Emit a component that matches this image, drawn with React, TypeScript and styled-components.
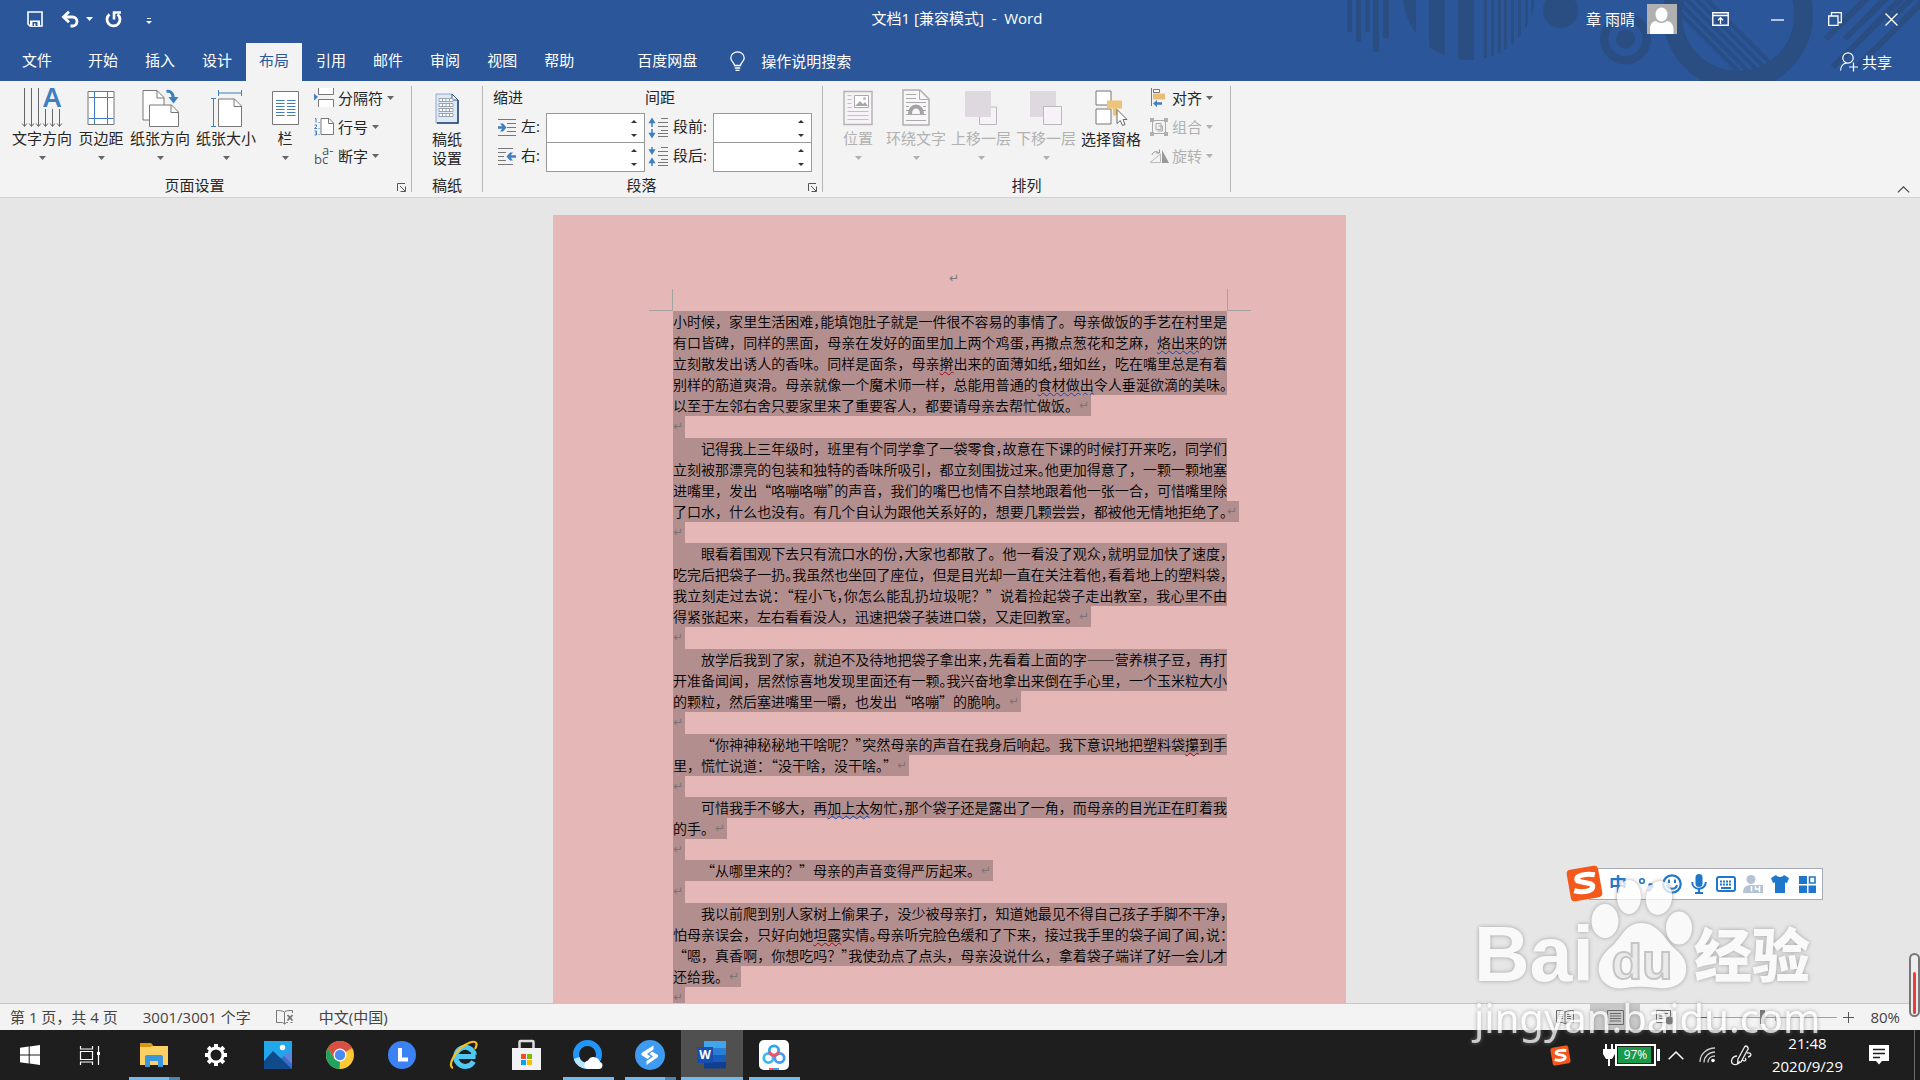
import React from 'react';
import styled, { createGlobalStyle, css } from 'styled-components';

const UI = `"Open Sans", "Noto Sans CJK SC", sans-serif`;
const BODY = `"Noto Sans CJK SC", sans-serif`;

const Global = createGlobalStyle`
  *, *::before, *::after { box-sizing: border-box; }
  body { margin: 0; overflow: hidden; font: 15px/20px ${UI}; color: #262626; background: #e6e6e6; }
  button { font: inherit; color: inherit; background: none; border: 0; padding: 0; margin: 0; cursor: pointer; }
  svg { display: block; flex: none; overflow: visible; }
`;

const Screen = styled.div`
  position: relative;
  display: flex;
  flex-direction: column;
  height: 100vh;
`;

/* ---------- title bar and tabs ---------- */

const Header = styled.header`
  position: relative;
  flex: none;
  background: #2b579a;
  color: #fff;
`;
const HeaderArt = styled.svg`
  position: absolute;
  top: 0;
  right: 0;
  overflow: hidden;
`;
const TitleBar = styled.div`
  position: relative;
  display: grid;
  grid-template-columns: 1fr auto 1fr;
  align-items: center;
  height: 38px;
`;
const QuickAccess = styled.div`
  display: flex;
  align-items: center;
  padding-left: 27px;
  gap: 12px;
`;
const UndoGroup = styled.div`
  display: flex;
  align-items: center;
  gap: 6px;
  padding: 0 0 0 6px;
`;
const CustomizeButton = styled.button`
  margin-left: 12px;
  padding-top: 4px;
`;
const DocTitle = styled.h1`
  margin: 0;
  padding: 0 6px 2px 0;
  font: inherit;
  white-space: pre;
`;
const WindowControls = styled.div`
  display: flex;
  justify-content: flex-end;
  align-items: center;
`;
const Account = styled.button`
  display: flex;
  align-items: center;
  gap: 12px;
  margin-right: 15px;
`;
const ControlButton = styled.button`
  display: flex;
  justify-content: center;
  align-items: center;
  width: 57px;
  height: 38px;
`;
const TabRow = styled.nav`
  position: relative;
  display: flex;
  align-items: stretch;
  gap: 1px;
  height: 43px;
  padding-top: 5px;
`;
const Tab = styled.button<{ $active?: boolean; $file?: boolean; $apart?: boolean }>`
  padding: 0 ${p => (p.$file ? 22 : 13)}px 4px;
  margin-left: ${p => (p.$apart ? 36 : 0)}px;
  background: ${p => (p.$active ? '#f3f3f3' : 'transparent')};
  color: ${p => (p.$active ? '#2b579a' : '#fff')};
`;
const TellMe = styled.button`
  display: flex;
  align-items: center;
  gap: 16px;
  margin-left: 19px;
  padding-bottom: 2px;
`;
const Share = styled.button`
  display: flex;
  align-items: center;
  gap: 4px;
  margin-left: auto;
  margin-right: 28px;
`;

/* ---------- ribbon ---------- */

const Ribbon = styled.section`
  display: flex;
  flex: none;
  padding: 5px 0;
  height: 117px;
  background: #f3f3f3;
  border-bottom: 1px solid #d2d2d2;
`;
const Group = styled.div<{ $width: number }>`
  display: flex;
  flex-direction: column;
  flex: none;
  width: ${p => p.$width}px;
  border-right: 1px solid #b5b5b5;
`;
const GroupBody = styled.div<{ $inset: number; $gap?: number }>`
  display: flex;
  flex: 1;
  gap: ${p => p.$gap ?? 5}px;
  padding: 0 ${p => p.$inset}px;
`;
const GroupFooter = styled.div`
  display: flex;
  align-items: center;
  height: 16px;
`;
const GroupTitle = styled.span`
  flex: 1;
  text-align: center;
  line-height: 16px;
  padding-top: 2px;
`;
const Launcher = styled.button`
  display: flex;
  align-items: flex-end;
  width: 22px;
  height: 15px;
  padding-left: 8px;
`;
const BigButton = styled.button<{ $disabled?: boolean }>`
  display: flex;
  flex-direction: column;
  align-items: center;
  flex: none;
  min-width: 46px;
  height: 82px;
  line-height: 19px;
  white-space: nowrap;
  color: ${p => (p.$disabled ? '#b1b1b1' : '#262626')};
`;
const IconBox = styled.span`
  display: flex;
  justify-content: center;
  align-items: center;
  height: 44px;
`;
const CaretBox = styled.span`
  display: flex;
  align-items: center;
  height: 20px;
`;
const SmallColumn = styled.div<{ $inset?: number }>`
  display: flex;
  flex-direction: column;
  padding-left: ${p => p.$inset ?? 0}px;
`;
const SmallButton = styled.button<{ $disabled?: boolean }>`
  display: flex;
  align-items: center;
  height: 29px;
  padding-bottom: 6px;
  gap: 4px;
  white-space: nowrap;
  color: ${p => (p.$disabled ? '#b1b1b1' : '#262626')};
`;
const Fields = styled.div`
  display: grid;
  grid-template-columns: auto auto;
  grid-template-rows: 27px 29px 29px;
`;
const FieldsTitle = styled.span`
  padding-top: 1px;
`;
const Field = styled.div<{ $label: number }>`
  display: grid;
  grid-template-columns: 20px ${p => p.$label}px 99px;
  align-items: center;
  padding-left: 4px;
  column-gap: 4px;
`;
const FieldLabel = styled.label`
  padding-bottom: 4px;
`;
const Spin = styled.div`
  display: flex;
  height: 30px;
  margin-bottom: -1px;
  background: #fff;
  border: 1px solid #999;
`;
const SpinInput = styled.input`
  flex: 1;
  min-width: 0;
  border: 0;
  padding: 0 6px;
  font: inherit;
  background: transparent;
`;
const SpinArrows = styled.div`
  display: flex;
  flex-direction: column;
  width: 20px;
`;
const SpinArrow = styled.button`
  display: flex;
  flex: 1;
  justify-content: center;
  align-items: center;
`;
const Collapse = styled.button`
  align-self: flex-end;
  margin: 0 10px -1px auto;
`;

/* ---------- document ---------- */

const Canvas = styled.main`
  flex: 1;
  min-height: 0;
  overflow: hidden;
  display: flex;
  justify-content: center;
  padding: 17px 21px 0 0;
  background: #e6e6e6;
`;
const Page = styled.article`
  flex: none;
  width: 793px;
  height: 1122px;
  padding: 0 119px 0 120px;
  background: #e5b7b7;
  border-top: 1px solid #c6c6c6;
  color: #000;
`;
const PageHeader = styled.div`
  display: flex;
  justify-content: center;
  align-items: flex-end;
  height: 73px;
  padding-left: 10px;
`;
const CropMarks = styled.div`
  display: flex;
  justify-content: space-between;
  height: 22px;
  margin: 0 -24px;
`;
const Crop = styled.span<{ $side: 'left' | 'right' }>`
  width: 24px;
  border-bottom: 1px solid #a3a3a3;
  ${p => (p.$side === 'left' ? css`border-right: 1px solid #a3a3a3;` : css`border-left: 1px solid #a3a3a3;`)}
`;
const Paragraph = styled.div`
  font: 350 14px/21px ${BODY};
`;
const Line = styled.div<{ $full: boolean }>`
  display: flex;
  width: ${p => (p.$full ? '100%' : 'fit-content')};
  height: 21px;
  background: #b28e8e;
`;
const LineText = styled.span<{ $full: boolean; $indent: boolean }>`
  flex: none;
  width: ${p => (p.$full ? '100%' : 'auto')};
  padding-left: ${p => (p.$indent ? 28 : 0)}px;
  white-space: nowrap;
  text-align-last: ${p => (p.$full ? 'justify' : 'left')};
`;
const HalfPunct = styled.span`
  font-feature-settings: "halt";
`;
const Mark = styled.span<{ $selected?: boolean; $tall?: boolean }>`
  display: block;
  flex: none;
  width: 12px;
  height: ${p => (p.$tall ? 22 : 21)}px;
  font: 12px/21px "DejaVu Sans", sans-serif;
  color: #7c7474;
  background: ${p => (p.$selected ? '#b28e8e' : 'transparent')};
`;
const Squiggle = styled.span<{ $color: string }>`
  text-decoration: underline wavy ${p => p.$color} 1px;
  text-underline-offset: 2px;
  text-decoration-skip-ink: none;
`;

/* ---------- status bar ---------- */

const StatusBar = styled.footer`
  display: flex;
  align-items: center;
  flex: none;
  height: 27px;
  padding: 0 20px 0 10px;
  border-top: 1px solid #c6c6c6;
  background: #f3f3f3;
  color: #444;
`;
const StatusButton = styled.button`
  display: flex;
  align-items: center;
  margin-right: 25px;
  white-space: nowrap;
`;
const StatusRight = styled.div`
  display: flex;
  align-items: center;
  margin-left: auto;
`;
const ViewButton = styled.button<{ $active?: boolean }>`
  display: flex;
  justify-content: center;
  align-items: center;
  width: 50px;
  height: 26px;
  background: ${p => (p.$active ? '#c8c8c8' : 'transparent')};
`;
const ZoomArea = styled.div`
  display: flex;
  align-items: center;
  gap: 6px;
  margin-left: 6px;
`;
const ZoomSlider = styled.input`
  appearance: none;
  width: 124px;
  height: 14px;
  margin: 0;
  background: linear-gradient(#a0a0a0, #a0a0a0) center / 100% 1px no-repeat,
    linear-gradient(#a0a0a0, #a0a0a0) center / 1px 8px no-repeat;
  &::-webkit-slider-thumb {
    appearance: none;
    width: 5px;
    height: 14px;
    background: #777;
  }
`;
const ZoomValue = styled.button`
  margin-left: 16px;
`;

/* ---------- task bar ---------- */

const TaskBar = styled.footer`
  display: flex;
  flex: none;
  height: 50px;
  background: #1e1e1e;
  color: #fff;
`;
const TaskSlot = styled.button<{ $narrow?: boolean; $active?: boolean; $first?: boolean }>`
  display: flex;
  flex-direction: column;
  align-items: center;
  justify-content: space-between;
  width: ${p => (p.$narrow ? 60 : 62)}px;
  margin-left: ${p => (p.$first ? 3 : 0)}px;
  background: ${p => (p.$active ? '#505050' : 'transparent')};
`;
const TaskIcon = styled.span`
  display: flex;
  justify-content: center;
  align-items: center;
  height: 47px;
  padding-top: 3px;
`;
const RunBar = styled.span<{ $kind: 'none' | 'one' | 'many' | 'wide' }>`
  width: ${p => (p.$kind === 'wide' ? '100%' : '51px')};
  height: 3px;
  background: ${p =>
    p.$kind === 'none' ? 'transparent' : p.$kind === 'many' ? 'linear-gradient(90deg, #76b9ed 40px, #4f84b0 40px)' : '#76b9ed'};
`;
const Tray = styled.div`
  display: flex;
  align-items: center;
  margin-left: auto;
`;
const TrayButton = styled.button<{ $gap: number }>`
  display: flex;
  align-items: center;
  margin-right: ${p => p.$gap}px;
`;
const Battery = styled.span`
  display: flex;
  align-items: center;
  gap: 1px;
`;
const BatteryCell = styled.span`
  width: 41px;
  height: 22px;
  border: 2px solid #fff;
  padding: 1px;
  font-size: 12px;
  line-height: 16px;
  text-align: center;
  background: linear-gradient(#189a48, #189a48) 1px 1px / 33px 16px no-repeat;
`;
const BatteryTip = styled.span`
  width: 3px;
  height: 12px;
  background: #fff;
`;
const Clock = styled.time`
  display: flex;
  flex-direction: column;
  align-items: center;
  line-height: 23px;
  margin-right: 26px;
`;
const ShowDesktop = styled.button`
  width: 6px;
  height: 50px;
  border-left: 1px solid #6b6b6b;
`;

/* ---------- floating windows ---------- */

const ImeBar = styled.div`
  position: absolute;
  right: 97px;
  bottom: 180px;
  display: flex;
  align-items: center;
  gap: 9px;
  height: 32px;
  width: 234px;
  padding-right: 6px;
  justify-content: flex-end;
  background: #fff;
  border: 1px solid #a7a9b4;
`;
const ImeLogo = styled.span`
  position: absolute;
  left: -24px;
  top: -4px;
`;
const ImeButton = styled.button`
  display: flex;
  justify-content: center;
  width: 18px;
  color: #1f77cc;
  font-weight: 700;
  font-size: 18px;
`;
const SideGauge = styled.div`
  position: absolute;
  right: 0;
  bottom: 63px;
  width: 11px;
  height: 64px;
  padding: 17px 2px 1px;
  border: 2px solid #777;
  border-radius: 6px;
  background: #eee;
`;
const GaugeFill = styled.div`
  height: 100%;
  border-radius: 2px;
  background: #f03a3a;
`;
const Watermark = styled.div`
  position: absolute;
  right: 104px;
  bottom: 36px;
  width: 342px;
  pointer-events: none;
  color: #fff;
  opacity: 0.78;
  filter: drop-shadow(0 0 2px #8c8c8c);
`;
const MarkRow = styled.div`
  display: flex;
  align-items: flex-end;
  height: 118px;
  padding-bottom: 2px;
`;
const MarkLatin = styled.span`
  font: 700 77px/72px "Liberation Sans", sans-serif;
  width: 116px;
`;
const MarkHan = styled.span`
  font: 900 58px/76px "Noto Sans CJK SC", sans-serif;
`;
const MarkUrl = styled.div`
  font: 400 40px/52px "Noto Sans", sans-serif;
  white-space: nowrap;
`;

/* ---------- icons ---------- */

type IconProps = { w: number; h: number; children: React.ReactNode };
const Icon = ({ w, h, children }: IconProps) => (
  <svg width={w} height={h} viewBox={`0 0 ${w} ${h}`} fill="none" aria-hidden="true">
    {children}
  </svg>
);
const G = '#777';
const B = '#3f7fbf';

const Caret = ({ color = '#666' }: { color?: string }) => (
  <Icon w={7} h={4}><path d="M0 0h7L3.500 4z" fill={color} /></Icon>
);

const SaveIcon = () => (
  <Icon w={16} h={16}>
    <path d="M1 1h14v14H3l-2-2z" stroke="#fff" strokeWidth="1.600" />
    <path d="M3 9.500h10v6H3z" fill="#fff" /><path d="M5.500 11h5v4h-2v-2.500h-1.500V15h-1.500z" fill="#2b579a" />
  </Icon>
);
const UndoIcon = () => (
  <Icon w={19} h={16}>
    <path d="M3 6h8.500a4.500 4.500 0 0 1 0 9H9.500" stroke="#fff" strokeWidth="2.800" />
    <path d="M8 .8 2.500 6 8 11.200" stroke="#fff" strokeWidth="2.800" />
  </Icon>
);
const RedoIcon = () => (
  <Icon w={17} h={17}>
    <path d="M4.500 3.300A6.500 6.500 0 1 0 12.500 3.300" stroke="#fff" strokeWidth="2.800" />
    <path d="M9 8.500V1.500H16" stroke="#fff" strokeWidth="2.600" />
  </Icon>
);
const CustomizeIcon = () => (
  <Icon w={6} h={6}><path d="M1 .5h4" stroke="#fff" /><path d="M0 3h6L3 6z" fill="#fff" /></Icon>
);
const Avatar = () => (
  <Icon w={30} h={30}>
    <path d="M0 0h30v30H0z" fill="#b0b0b0" />
    <ellipse cx="14.500" cy="10.500" rx="6" ry="7" fill="#fff" />
    <path d="M3 30v-5c0-4 2-8 6-8 3 2.500 8 2.500 11 0 4 0 6.500 4 6.500 8v5z" fill="#fff" />
  </Icon>
);
const RibbonOptIcon = () => (
  <Icon w={17} h={14}>
    <path d="M.8.800h15.400v12.400H.8zM1 3.500h15" stroke="#fff" strokeWidth="1.400" />
    <path d="M8.500 12V6M6 8.200 8.500 5.700 11 8.200" stroke="#fff" strokeWidth="1.300" />
  </Icon>
);
const MinIcon = () => <Icon w={13} h={3}><path d="M0 2h13" stroke="#fff" strokeWidth="1.300" /></Icon>;
const RestoreIcon = () => (
  <Icon w={14} h={14}>
    <path d="M.7 4h9.300v9.300H.7zM3.500 4V.7H13.300V10.500H10" stroke="#fff" strokeWidth="1.300" />
  </Icon>
);
const CloseIcon = () => <Icon w={13} h={13}><path d="m.5.500 12 12m0-12-12 12" stroke="#fff" strokeWidth="1.400" /></Icon>;
const BulbIcon = () => (
  <Icon w={15} h={20}>
    <path d="M4.500 14.500c0-3-3.700-4-3.700-7.500a6.700 6.200 0 0 1 13.400 0c0 3.500-3.700 4.500-3.700 7.500zM4.800 17h5.400M5.500 19.400h4" stroke="#fff" strokeWidth="1.300" />
  </Icon>
);
const ShareIcon = () => (
  <Icon w={18} h={20}>
    <circle cx="8" cy="6" r="5.200" stroke="#fff" strokeWidth="1.200" />
    <path d="M.6 18.500c0-4 2.500-7 6-7.300M9 15h9M13.500 10.500V19.500" stroke="#fff" strokeWidth="1.200" />
  </Icon>
);

const TextDirIcon = () => (
  <Icon w={40} h={42}>
    {[2.5, 9.5, 16.5].map(x => <path key={x} d={`M${x} 1v38m-2.300-2.500 2.300 3 2.300-3`} stroke="#666" />)}
    {[23.5, 30.5, 37.5].map(x => <path key={x} d={`M${x} 22v17m-2.300-2.500 2.300 3 2.300-3`} stroke="#666" />)}
    <text x="21" y="20" fontFamily="Noto Sans" fontWeight="600" fontSize="27" fill={B}>A</text>
  </Icon>
);
const MarginsIcon = () => (
  <Icon w={28} h={36}>
    <path d="M1 1.500h26v33H1z" fill="#fff" stroke={G} />
    <path d="M7.500 2v32M20.500 2v32M1.500 7.500h25M1.500 28.500h25" stroke={B} />
  </Icon>
);
const OrientIcon = () => (
  <Icon w={37} h={38}>
    <path d="M1 1.500h14l7 7V31H1z" fill="#fff" stroke={G} /><path d="M15 1.500V9h7" stroke={G} />
    <path d="M7.500 16h22l7 7v14.500h-29z" fill="#fff" stroke={G} /><path d="M29 16v7.500h7" stroke={G} />
    <path d="M24.500 2.500c5-1 7 3 7 8" stroke={B} strokeWidth="3" /><path d="M26.500 8h10l-5 6.500z" fill={B} />
  </Icon>
);
const SizeIcon = () => (
  <Icon w={32} h={38}>
    <path d="M8.500 10h16l7 7v20.500h-23z" fill="#fff" stroke={G} /><path d="M24 10v7.500h7" stroke={G} />
    <path d="M8.500 4h23M8.500 1v6M31.500 1v6M3.500 10v27M1 9.500h5M1 37.500h5" stroke={B} />
  </Icon>
);
const ColumnsIcon = () => (
  <Icon w={27} h={36}>
    <path d="M.5 1.500h26v33H.5z" fill="#fff" stroke={G} />
    {[10, 13, 16, 19, 22, 25].map(y => <path key={y} d={`M4 ${y + .5}h8.500M15 ${y + .5}h8.500`} stroke={B} />)}
  </Icon>
);
const BreakIcon = () => (
  <Icon w={20} h={19}>
    <path d="M4.500 0v6.500h15V0M4.500 19v-7.500h15V19" fill="#fff" stroke={G} /><path d="M0 5.500 4 9l-4 3.500z" fill={B} />
  </Icon>
);
const LineNoIcon = () => (
  <Icon w={20} h={19}>
    <path d="M7 1.500h8l4.500 4.500v11.500H7z" fill="#fff" stroke={G} /><path d="M14.500 1.500v5h5" stroke={G} />
    <path d="M1 1.500h1v4M.5 8h2v1.500L.5 11.500h2.500M.5 14h2v4h-2M1 16h2" stroke={B} />
    <path d="M4.500 5.500h1M4.500 11.500h1M4.500 17.500h1" stroke={B} />
  </Icon>
);
const HyphenIcon = () => (
  <Icon w={20} h={20}>
    <text x="0" y="18" fontFamily="Open Sans" fontSize="13" fill="#555">bc<tspan x="8" y="9">a-</tspan></text>
  </Icon>
);
const GridPaperIcon = () => (
  <Icon w={24} h={31}>
    <path d="M1 1h16l6 6v23H1z" fill="#dfe8f5" stroke="#94a9cc" />
    <path d="M23 7v23H2" stroke="#1f3f78" strokeWidth="1.500" /><path d="M17 1v6h6z" fill="#fff" stroke="#2e568f" />
    {[6, 11, 16, 21].map(y => <path key={y} d={`M4 ${y - .5}h14v3H4zM7.500 ${y}v3M11 ${y}v3M14.500 ${y}v3`} stroke="#9aa3b0" fill="#fff" />)}
  </Icon>
);
const IndentIcon = ({ right }: { right?: boolean }) => (
  <Icon w={20} h={17}>
    <path d={right ? 'M1 .5h15M1 4.500h8M1 8.500h6M1 12.500h8M1 16.500h15' : 'M1 .5h18M10 4.500h9M10 8.500h9M10 12.500h9M1 16.500h18'} stroke={G} />
    <path d={right ? 'M19 7.300h-5.200l2.200-2.800h-3L9.500 8.500l3.500 4h3l-2.200-2.800H19z' : 'M1 7.300h4.200L3 4.500h3l3.500 4-3.500 4H3l2.200-2.800H1z'} fill={B} />
  </Icon>
);
const SpacingIcon = ({ after }: { after?: boolean }) => (
  <Icon w={20} h={20}>
    <path d="M12 .5h7M9 4.500h10M9 8.500h10M12 12.500h7M9 15.500h10M9 18.500h10" stroke={G} />
    {after
      ? <path d="M3 0v5M.8 3 3 6.500 5.200 3zM3 19v-5M.8 15.500 3 12l2.200 3.500z" stroke={B} strokeWidth="1.500" fill={B} />
      : <path d="M3 9V2M.8 4.500 3 1l2.200 3.500zM3 11v7M.8 15.500 3 19l2.200-3.500z" stroke={B} strokeWidth="1.500" fill={B} />}
  </Icon>
);
const PositionIcon = () => (
  <Icon w={30} h={36}>
    <path d="M1 1.500h28v33H1z" fill="#f7f2f7" stroke="#b5b5b5" strokeWidth="1.500" />
    <path d="M4.500 5.500h4M4.500 9.500h4M4.500 13.500h4M4.500 17.500h4M4.500 21.500h21M4.500 25.500h21M4.500 29.500h21" stroke="#c4bfc4" />
    <path d="M11.500 5.500h14v12h-14z" fill="#fff" stroke="#aaa" /><path d="m12 16 5-5 3 3 2-2 3 4z" fill="#a7a7a7" /><circle cx="21.500" cy="8.500" r="1.500" fill="#bbb" />
  </Icon>
);
const WrapIcon = () => (
  <Icon w={28} h={37}>
    <path d="M1 1h17l9 9v26H1z" fill="#f9f6f9" stroke="#b0b0b0" strokeWidth="1.500" /><path d="M17.500 1v9.500H27" stroke="#b0b0b0" />
    <path d="M4 5.500h10M4 9.500h10M4 13.500h20M4 17.500h3M21 17.500h3M4 21.500h3M21 21.500h3M4 25.500h20M4 31.500h20" stroke="#aaa" />
    <path d="M8 25c0-10 12-10 12 0" stroke="#a2a2a2" strokeWidth="4" />
  </Icon>
);
const LayerIcon = ({ back }: { back?: boolean }) => (
  <Icon w={33} h={36}>
    {!back && <path d="M14.500 17h17v17.500h-17z" fill="#f7f2f7" stroke="#b8b8b8" />}
    <path d="M0 1h26v26H0z" fill="#ded9de" />
    {back && <path d="M13.500 16.500h18v18h-18z" fill="#f7f2f7" stroke="#b8b8b8" />}
  </Icon>
);
const SelectPaneIcon = () => (
  <Icon w={32} h={37}>
    <path d="M1 1h15v14H1zM1 19h15v15H1z" fill="#fff" stroke={G} /><path d="M12 10.500h15v8H22v7h-4v-7h-6z" fill="#eec478" />
    <path d="M22 19.500v14l3.300-3 2.200 5 2.500-1-2-5h4z" fill="#fff" stroke="#666" />
  </Icon>
);
const AlignIcon = () => (
  <Icon w={18} h={19}>
    <path d="M3.500 1.500h6v3h-6z" fill="#fff" stroke={G} /><path d="M3 5.500h12v6H3z" fill="#e9bd77" />
    <path d="M1.500 0v18" stroke={G} /><path d="M3 15.500 7 12v2.300h5v2.500H7V19z" fill={B} />
  </Icon>
);
const GroupIcon = () => (
  <Icon w={18} h={18}>
    <path d="M3 2.500h12M3 15.500h12M2.500 3v12M15.500 3v12M6 5.500h5v6H6zM8.500 8h4v5h-5" stroke="#aaa" />
    <path d="M0 0h4v4H0zM14 0h4v4h-4zM0 14h4v4H0zM14 14h4v4h-4z" fill="#b0b0b0" />
  </Icon>
);
const RotateIcon = () => (
  <Icon w={18} h={14}>
    <path d="M10.500 13.500H0L10.500 5z" stroke="#bbb" /><path d="M12 14V1l7 13z" fill="#999" /><path d="M2 6c1-4 5-4 7-2M9.500.500V4H6" stroke="#999" />
  </Icon>
);
const LauncherIcon = () => (
  <Icon w={9} h={9}><path d="M.5 8V.5H8M3 3l5 5M8.500 3.500v5h-5" stroke="#555" /></Icon>
);
const TinyArrow = ({ down }: { down?: boolean }) => (
  <Icon w={6} h={3}><path d={down ? 'M0 0h6L3 3z' : 'M0 3h6L3 0z'} fill="#333" /></Icon>
);

const ProofIcon = () => (
  <Icon w={18} h={15}>
    <path d="M8.500 2C6 .500 3 .500.500.500V12.500h6l2 1.500 2-1.500h1.500M8.500 2v12M8.500 2C10 .500 13 .500 16.500.500V3M16.500 12.500h-2" stroke="#777" />
    <path d="m11.500 5 5 5.500m0-5.500-5 5.500" stroke="#777" strokeWidth="1.800" />
  </Icon>
);
const ReadIcon = () => (
  <Icon w={18} h={15}>
    <path d="M9 2C6 .500 3 .500.500.500V12.500h6l2.500 1.500 2.500-1.500h6V.500C15 .500 12 .500 9 2v12M3 4.500h4M3 6.500h4M3 8.500h4M11 4.500h4M11 6.500h4M11 8.500h4" stroke="#666" />
  </Icon>
);
const PrintIcon = () => (
  <Icon w={17} h={15}><path d="M.5.500h16v14H.5zM3 3.500h11M3 6h11M3 8.500h11M3 11h11" stroke="#666" /></Icon>
);
const WebIcon = () => (
  <Icon w={18} h={15}>
    <path d="M10 12.500H.5V.500h14v6M3 3.500h9M3 6h7M3 8.500h6" stroke="#666" /><circle cx="13.500" cy="10.500" r="4" fill="#777" />
  </Icon>
);

/* ---------- task bar icons ---------- */

const StartIcon = () => (
  <Icon w={20} h={20}><path d="M0 2.800 8.700 1.600V9.500H0zM9.700 1.500 20 0v9.500H9.700zM0 10.500h8.700v7.900L0 17.200zM9.700 10.500H20V20L9.700 18.500z" fill="#fff" /></Icon>
);
const TaskViewIcon = () => (
  <Icon w={21} h={19}>
    <path d="M.5 0v3h12V0M.5 19v-3h12v3M.5 5.500h12v8H.5zM18.500 0v19" stroke="#fff" strokeWidth="1.200" /><path d="M17 6h3v3h-3z" fill="#fff" />
  </Icon>
);
const ExplorerIcon = () => (
  <Icon w={28} h={24}>
    <path d="M0 3V1h11l2 2h15v19H0z" fill="#fbd165" /><path d="M0 0h11l2 2-2 2H0z" fill="#dc9712" />
    <path d="M5 24V14q0-2 2-2h14q2 0 2 2v10h-5v-6h-8v6z" fill="#3a96dd" />
  </Icon>
);
const GearIcon = () => (
  <Icon w={24} h={24}>
    <circle cx="12" cy="12" r="7" stroke="#fff" strokeWidth="3" />
    {[0, 45, 90, 135, 180, 225, 270, 315].map(a => <path key={a} d="M10 1h4v4h-4z" fill="#fff" transform={`rotate(${a} 12 12)`} />)}
  </Icon>
);
const PhotosIcon = () => (
  <Icon w={28} h={28}>
    <path d="M0 0h28v28H0z" fill="#22a7ec" /><path d="M14 28 20 14l8-4v18z" fill="#5b86d9" />
    <path d="m14 20 6-5 8 8v5H14z" fill="#3c6bd0" /><path d="M0 20 9 10l19 18H0z" fill="#114a8b" /><circle cx="18.500" cy="6.500" r="2.700" fill="#fff" />
  </Icon>
);
const ChromeIcon = () => (
  <Icon w={28} h={28}>
    <circle cx="14" cy="14" r="14" fill="#fcc934" />
    <path d="M14 14 1.900 7A14 14 0 0 1 26.100 7z" fill="#d94f42" /><path d="M14 7h12.100A14 14 0 0 0 1.900 7L8 17.500z" fill="#d94f42" />
    <path d="M1.900 7 8 17.500 14 21l-.500 7A14 14 0 0 1 1.900 7z" fill="#1ea362" /><path d="m20 17.500-6 10.500h-.5l2-7z" fill="#fcc934" />
    <circle cx="14" cy="14" r="6.500" fill="#fff" /><circle cx="14" cy="14" r="5.200" fill="#4a8af4" />
  </Icon>
);
const LIcon = () => (
  <Icon w={28} h={28}><circle cx="14" cy="14" r="14" fill="#3d82f5" /><path d="M12 7v11.500h8" stroke="#fff" strokeWidth="4" /></Icon>
);
const IeIcon = () => (
  <Icon w={30} h={28}>
    <path d="M7 15.500h19.500M24.500 20.500a9.500 9.500 0 1 1 1-6.500" stroke="#4fc8f4" strokeWidth="5" />
    <path d="M4 27C-2 25 6 10 16 4s14-3 10 4" stroke="#f3c120" strokeWidth="2.200" />
  </Icon>
);
const StoreIcon = () => (
  <Icon w={29} h={30}>
    <path d="M7.500 10V2q0-1 1-1h12q1 0 1 1v8" stroke="#ddd" strokeWidth="2.500" /><path d="M0 8h29v22H0z" fill="#f2f2f2" />
    <path d="M9 14h5v5H9z" fill="#f25022" /><path d="M15 14h5v5h-5z" fill="#7fba00" /><path d="M9 20h5v5H9z" fill="#00a4ef" /><path d="M15 20h5v5h-5z" fill="#ffb900" />
  </Icon>
);
const QqIcon = () => (
  <Icon w={30} h={30}>
    <circle cx="14.500" cy="14.500" r="11.500" stroke="#2196f8" strokeWidth="6" /><path d="M3.500 18a11.500 11.500 0 0 0 11 8" stroke="#b7e6fb" strokeWidth="6" />
    <path d="M14 29a4.500 4.500 0 0 1 1-8.500 6.500 6.500 0 0 1 12 1.500 3.600 3.600 0 0 1-1 7z" fill="#fff" />
  </Icon>
);
const BoltIcon = () => (
  <Icon w={30} h={30}>
    <circle cx="15" cy="15" r="15" fill="#3f9bef" />
    <path d="M18.500 5.500v4l-6.500 4.500 3.500 2.500-3 2.500-6-4v-2zM17 11.500l6 3.500v2l-11.500 8v-4l6.500-4.500-3.500-2.500z" fill="#fff" />
  </Icon>
);
const WordIcon = () => (
  <Icon w={30} h={28}>
    <path d="M7 0h22v7H7z" fill="#41a5ee" /><path d="M7 7h22v7H7z" fill="#2b7cd3" /><path d="M7 14h22v7H7z" fill="#185abd" /><path d="M7 21h22v6.500H7z" fill="#103f91" />
    <path d="M0 6h16v16H0z" fill="#174fae" />
    <text x="8" y="18" textAnchor="middle" fontFamily="Open Sans" fontWeight="700" fontSize="12" fill="#fff">W</text>
  </Icon>
);
const NetdiskIcon = () => (
  <Icon w={30} h={30}>
    <rect width="30" height="30" rx="5" fill="#fff" />
    <circle cx="9.500" cy="18" r="4.700" stroke="#3db8f5" strokeWidth="2.800" /><circle cx="20.500" cy="18" r="4.700" stroke="#3d9df5" strokeWidth="2.800" />
    <circle cx="15" cy="10.500" r="4.700" stroke="#2ea5f0" strokeWidth="2.800" /><path d="M10.500 12a4.700 4.700 0 0 0 9 0" stroke="#f2506e" strokeWidth="2.800" />
    <path d="M10 28h5v2h-5z" fill="#f2506e" /><path d="M15 28h5v2h-5z" fill="#3d9df5" />
  </Icon>
);
const SogouIcon = ({ size }: { size: number }) => (
  <svg width={size} height={size} viewBox="0 0 36 36" fill="none" aria-hidden="true">
    <rect x="2.500" y="2.500" width="31" height="31" rx="4" fill="#f4581b" transform="rotate(-10 18 18)" />
    <path d="M28 9.500C20 8 10 10 10.500 14s15.500 2 15.500 7-10 6-18 4" stroke="#fff" strokeWidth="5" />
  </svg>
);
const PlugIcon = () => (
  <Icon w={12} h={22}><path d="M3 0v6M9 0v6M6 14v8" stroke="#fff" strokeWidth="2" /><path d="M0 5h12v5l-3 5H3l-3-5z" fill="#fff" /></Icon>
);
const ChevronUp = ({ color, small }: { color: string; small?: boolean }) => (
  <svg width={small ? 13 : 16} height={small ? 7 : 9} viewBox="0 0 16 9" fill="none" aria-hidden="true">
    <path d="m.7 8.300 7.300-7.300 7.300 7.300" stroke={color} strokeWidth="1.500" />
  </svg>
);
const WifiIcon = () => (
  <Icon w={17} h={16}>
    <path d="M1 15C1 7 8 1 16 1M5 15.500C5 9.500 10 5 16 5M9 15.500C9 11.500 12 9 16 9" stroke="#ccc" strokeWidth="1.300" /><circle cx="14" cy="13.500" r="1.800" fill="#fff" />
  </Icon>
);
const PenIcon = () => (
  <Icon w={21} h={21}>
    <path d="m7 14 6.500-12q1.500-2 3 0t0 3L10 17l-3.500 1.500z" stroke="#eee" strokeWidth="1.300" />
    <path d="M6 11c-5 0-7 6-4 8s7-1 6-3M11 15c3 2 5 0 3-2M16 8c5-1 5 3 1 4" stroke="#eee" strokeWidth="1.300" />
  </Icon>
);
const NoticeIcon = () => (
  <Icon w={20} h={20}><path d="M0 0h20v16h-7l-3 3.500L7 16H0z" fill="#fff" /><path d="M4 4.500h12M4 8.500h12M4 12.500h7" stroke="#1e1e1e" strokeWidth="1.300" /></Icon>
);

/* ---------- input method icons ---------- */

const PunctIcon = () => (
  <Icon w={15} h={16}><circle cx="4" cy="5" r="2.300" stroke="#1f77cc" strokeWidth="1.600" /><path d="M11 9.500a1.800 1.800 0 1 1 2 2c0 2-1 3-3 3.500" stroke="#1f77cc" strokeWidth="2" /></Icon>
);
const SmileIcon = () => (
  <Icon w={20} h={20}><circle cx="10" cy="10" r="8.700" stroke="#1f77cc" strokeWidth="2.200" /><path d="M5 11c1 5 9 5 10 0M7 5.500v3.500M13 5.500v3.500" stroke="#1f77cc" strokeWidth="2" /></Icon>
);
const MicIcon = () => (
  <Icon w={16} h={20}><rect x="4.500" width="7" height="13" rx="3.500" fill="#1f77cc" /><path d="M1.200 8c0 9 13.600 9 13.600 0M8 15v4M4 19h8" stroke="#1f77cc" strokeWidth="2" /></Icon>
);
const KeyboardIcon = () => (
  <Icon w={20} h={16}><rect x="1" y="1" width="18" height="14" rx="2" stroke="#1f77cc" strokeWidth="2" /><path d="M4 5.500h12M4 8.500h12" stroke="#1f77cc" strokeWidth="2" strokeDasharray="2 1" /><path d="M5 12h10" stroke="#1f77cc" strokeWidth="2" /></Icon>
);
const UserIcon = () => (
  <Icon w={20} h={18}><circle cx="8" cy="4.500" r="4.500" fill="#b6c3d6" /><path d="M0 18c0-6 3-8 8-8h12v8z" fill="#b6c3d6" /><path d="M8.500 11v5.500M12.500 11v3h4M16.500 11v6" stroke="#fff" strokeWidth="1.500" /></Icon>
);
const ShirtIcon = () => (
  <Icon w={18} h={18}><path d="M5 0c1.500 2.500 6.500 2.500 8 0l5 3-2 5-2-.5V18H4V7.500L2 8 0 3z" fill="#1f77cc" /></Icon>
);
const AppsIcon = () => (
  <Icon w={17} h={17}><path d="M0 0h8v8H0zM0 9.500h8V17H0zM9.500 9.500H17V17H9.500z" fill="#1f77cc" /><path d="M10.500 1H16v6h-5.500z" stroke="#1f77cc" strokeWidth="1.600" /></Icon>
);
const PawIcon = () => (
  <svg width="104" height="112" viewBox="0 0 104 112" aria-hidden="true">
    <g fill="#fff">
      <ellipse cx="15" cy="43" rx="13.500" ry="17" /><ellipse cx="39" cy="19" rx="12" ry="17" />
      <ellipse cx="69" cy="20" rx="13" ry="17" transform="rotate(10 69 20)" /><ellipse cx="89" cy="50" rx="13" ry="16.500" />
      <path d="M51 45c-16 0-20 16-30 24S6 88 10 98s15 14 26 12 20-1 32 0 26-2 28-16-8-20-14-26-14-23-31-23z" />
    </g>
    <text x="52" y="101" textAnchor="middle" fontFamily="Liberation Sans" fontWeight="700" fontSize="50" fill="#ececec" stroke="#bdbdbd" strokeWidth="2">du</text>
  </svg>
);

/* ---------- data ---------- */

type Para = { indent: boolean; tall?: boolean; lines: string[]; spill?: boolean };
const PARAS: Para[] = [
  { indent: false, tall: true, lines: [
    '小时候，家里生活困难，能填饱肚子就是一件很不容易的事情了。母亲做饭的手艺在村里是',
    '有口皆碑，同样的黑面，母亲在发好的面里加上两个鸡蛋，再撒点葱花和芝麻，{b烙出来}的饼',
    '立刻散发出诱人的香味。同样是面条，母亲{r擀}出来的面薄如纸，细如丝，吃在嘴里总是有着',
    '别样的筋道爽滑。母亲就像一个魔术师一样，总能用普通的{b食材做出}令人垂涎欲滴的美味。',
    '以至于左邻右舍只要家里来了重要客人，都要请母亲去帮忙做饭。'] },
  { indent: true, spill: true, lines: [
    '记得我上三年级时，班里有个同学拿了一袋零食，故意在下课的时候打开来吃，同学们',
    '立刻被那漂亮的包装和独特的香味所吸引，都立刻围拢过来。他更加得意了，一颗一颗地塞',
    '进嘴里，发出“咯嘣咯嘣”的声音，我们的嘴巴也情不自禁地跟着他一张一合，可惜嘴里除',
    '了口水，什么也没有。有几个自认为跟他关系好的，想要几颗尝尝，都被他无情地拒绝了。'] },
  { indent: true, tall: true, lines: [
    '眼看着围观下去只有流口水的份，大家也都散了。他一看没了观众，就明显加快了速度，',
    '吃完后把袋子一扔。我虽然也坐回了座位，但是目光却一直在关注着他，看着地上的塑料袋，',
    '我立刻走过去说：“程小飞，你怎么能乱扔垃圾呢？”说着捡起袋子走出教室，我心里不由',
    '得紧张起来，左右看看没人，迅速把袋子装进口袋，又走回教室。'] },
  { indent: true, tall: true, lines: [
    '放学后我到了家，就迫不及待地把袋子拿出来，先看着上面的字——营养棋子豆，再打',
    '开准备闻闻，居然惊喜地发现里面还有一颗。我兴奋地拿出来倒在手心里，一个玉米粒大小',
    '的颗粒，然后塞进嘴里一嚼，也发出“咯嘣”的脆响。'] },
  { indent: true, lines: [
    '“你神神秘秘地干啥呢？”突然母亲的声音在我身后响起。我下意识地把塑料袋{r攥}到手',
    '里，慌忙说道：“没干啥，没干啥。”'] },
  { indent: true, lines: [
    '可惜我手不够大，再{b加上太}匆忙，那个袋子还是露出了一角，而母亲的目光正在盯着我',
    '的手。'] },
  { indent: true, tall: true, lines: ['“从哪里来的？”母亲的声音变得严厉起来。'] },
  { indent: true, lines: [
    '我以前爬到别人家树上偷果子，没少被母亲打，知道她最见不得自己孩子手脚不干净，',
    '怕母亲误会，只好向她{r坦露}实情。母亲听完脸色缓和了下来，接过我手里的袋子闻了闻，说：',
    '“嗯，真香啊，你想吃吗？”我使劲点了点头，母亲没说什么，拿着袋子端详了好一会儿才',
    '还给我。'] },
];

const CHARS_PER_LINE = 39;

/* Picks which punctuation marks take half a cell so that an overlong line fits its measure. */
const pickHalved = (s: string, indent: boolean) => {
  const count = s.replace(/\{[br]|\}/g, '').length + (indent ? 2 : 0);
  const need = (count - CHARS_PER_LINE) * 2 - 1;
  const spots = [...s].map((c, i) => ('，。：“”'.includes(c) ? i : -1)).filter(i => i >= 0);
  const chosen = new Set<number>();
  if (need <= 0) return chosen;
  if (spots[spots.length - 1] === s.length - 1) chosen.add(spots.pop() as number);
  const rest = Math.min(need - chosen.size, spots.length);
  for (let k = 0; k < rest; k++) chosen.add(spots[Math.floor(((k + 0.5) * spots.length) / rest)]);
  return chosen;
};

const renderText = (s: string, indent: boolean, full: boolean) => {
  const halved = full ? pickHalved(s, indent) : new Set<number>();
  let at = 0;
  return s.split(/(\{[br][^}]+\}|[，。：“”])/).filter(Boolean).map((part, i) => {
    const start = at;
    at += part.length;
    if (part[0] === '{') return <Squiggle key={i} $color={part[1] === 'b' ? '#1747b0' : '#b00010'}>{part.slice(2, -1)}</Squiggle>;
    return halved.has(start) ? <HalfPunct key={i}>{part}</HalfPunct> : part;
  });
};

const ParagraphView = ({ para }: { para: Para }) => (
  <Paragraph>
    {para.lines.map((line, i) => {
      const last = i === para.lines.length - 1;
      const full = !last || !!para.spill;
      const indent = para.indent && i === 0;
      return (
        <Line key={i} $full={full}>
          <LineText $full={full} $indent={indent}>{renderText(line, indent, full)}</LineText>
          {last && <Mark $selected>↵</Mark>}
        </Line>
      );
    })}
    <Mark $selected $tall={para.tall}>↵</Mark>
  </Paragraph>
);

const PAGE_SETUP = [
  { label: '文字方向', icon: <TextDirIcon /> },
  { label: '页边距', icon: <MarginsIcon /> },
  { label: '纸张方向', icon: <OrientIcon /> },
  { label: '纸张大小', icon: <SizeIcon /> },
  { label: '栏', icon: <ColumnsIcon /> },
];
const PAGE_SMALL = [
  { label: '分隔符', icon: <BreakIcon /> },
  { label: '行号', icon: <LineNoIcon /> },
  { label: '断字', icon: <HyphenIcon /> },
];
const ARRANGE = [
  { label: '位置', icon: <PositionIcon />, off: true },
  { label: '环绕文字', icon: <WrapIcon />, off: true },
  { label: '上移一层', icon: <LayerIcon />, off: true },
  { label: '下移一层', icon: <LayerIcon back />, off: true },
  { label: '选择窗格', icon: <SelectPaneIcon />, off: false },
];
const ARRANGE_SMALL = [
  { label: '对齐', icon: <AlignIcon />, off: false },
  { label: '组合', icon: <GroupIcon />, off: true },
  { label: '旋转', icon: <RotateIcon />, off: true },
];
const FIELDS = [
  { id: 'indent-left', label: '左:', w: 21, icon: <IndentIcon /> },
  { id: 'space-before', label: '段前:', w: 36, icon: <SpacingIcon /> },
  { id: 'indent-right', label: '右:', w: 21, icon: <IndentIcon right /> },
  { id: 'space-after', label: '段后:', w: 36, icon: <SpacingIcon after /> },
];
type Run = 'none' | 'one' | 'many' | 'wide';
const APPS: { name: string; icon: React.ReactNode; run: Run }[] = [
  { name: '文件资源管理器', icon: <ExplorerIcon />, run: 'many' },
  { name: '设置', icon: <GearIcon />, run: 'none' },
  { name: '照片', icon: <PhotosIcon />, run: 'none' },
  { name: 'Chrome', icon: <ChromeIcon />, run: 'none' },
  { name: 'L', icon: <LIcon />, run: 'none' },
  { name: 'Internet Explorer', icon: <IeIcon />, run: 'none' },
  { name: 'Microsoft Store', icon: <StoreIcon />, run: 'none' },
  { name: 'QQ浏览器', icon: <QqIcon />, run: 'one' },
  { name: '迅捷', icon: <BoltIcon />, run: 'many' },
  { name: 'Word', icon: <WordIcon />, run: 'wide' },
  { name: '百度网盘', icon: <NetdiskIcon />, run: 'one' },
];

const Art = () => (
  <HeaderArt width="600" height="81" viewBox="1320 0 600 81" aria-hidden="true">
    <defs>
      <clipPath id="stripes"><circle cx="1469" cy="-6" r="66" /></clipPath>
      <clipPath id="inner"><circle cx="1738" cy="15" r="57" /></clipPath>
    </defs>
    <g fill="#2a4d82">
      <path d="M1347 0h5v32h-5zM1356 0h5v42h-5zM1365 0h5v32h-5zM1373 0h6v52h-6zM1383 0h6v38h-6z" />
      <g clipPath="url(#stripes)">
        <path d="M1403 0h13v70h-13zM1429 0h16v70h-16zM1458 0h16v70h-16z" />
        {[1484, 1491, 1498, 1504, 1511, 1518, 1525, 1531].map(x => <rect key={x} x={x} width="3" height="70" />)}
      </g>
      <circle cx="1560.500" cy="10.500" r="17.500" /><circle cx="1625.500" cy="39" r="9.500" />
    </g>
    <g fill="none" stroke="#2a4d82">
      <circle cx="1625.500" cy="39" r="21.200" strokeWidth="8.500" />
      <circle cx="1738" cy="15" r="65.500" strokeWidth="19" />
      <g clipPath="url(#inner)" strokeWidth="4">
        {[1707, 1697, 1687, 1677, 1667].map(x => <path key={x} d={`M${x - 10}-10l100 100`} />)}
      </g>
      <path strokeWidth="6" d="M1826 39 1868-3M1845 39l42-42M1833 67l70-70M1857 67l66-66M1888 22l28-28" />
    </g>
  </HeaderArt>
);

export default function App() {
  return (
    <Screen lang="zh-CN">
      <Global />
      <Header>
        <Art />
        <TitleBar>
          <QuickAccess>
            <button aria-label="保存"><SaveIcon /></button>
            <UndoGroup>
              <button aria-label="撤消"><UndoIcon /></button>
              <button aria-label="撤消选项"><Caret color="#fff" /></button>
            </UndoGroup>
            <button aria-label="重复"><RedoIcon /></button>
            <CustomizeButton aria-label="自定义快速访问工具栏"><CustomizeIcon /></CustomizeButton>
          </QuickAccess>
          <DocTitle>{'文档1 [兼容模式]  -  Word'}</DocTitle>
          <WindowControls>
            <Account>章 雨晴<Avatar /></Account>
            <ControlButton aria-label="功能区显示选项"><RibbonOptIcon /></ControlButton>
            <ControlButton aria-label="最小化"><MinIcon /></ControlButton>
            <ControlButton aria-label="向下还原"><RestoreIcon /></ControlButton>
            <ControlButton aria-label="关闭"><CloseIcon /></ControlButton>
          </WindowControls>
        </TitleBar>
        <TabRow>
          <Tab $file>文件</Tab>
          {['开始', '插入', '设计', '布局', '引用', '邮件', '审阅', '视图', '帮助'].map(t => (
            <Tab key={t} $active={t === '布局'}>{t}</Tab>
          ))}
          <Tab $apart>百度网盘</Tab>
          <TellMe><BulbIcon />操作说明搜索</TellMe>
          <Share><ShareIcon />共享</Share>
        </TabRow>
      </Header>

      <Ribbon>
        <Group $width={412}>
          <GroupBody $inset={12} $gap={6}>
            {PAGE_SETUP.map(b => (
              <BigButton key={b.label}><IconBox>{b.icon}</IconBox>{b.label}<CaretBox><Caret /></CaretBox></BigButton>
            ))}
            <SmallColumn>
              {PAGE_SMALL.map(b => <SmallButton key={b.label}>{b.icon}{b.label}<Caret /></SmallButton>)}
            </SmallColumn>
          </GroupBody>
          <GroupFooter><GroupTitle>页面设置</GroupTitle><Launcher aria-label="页面设置选项"><LauncherIcon /></Launcher></GroupFooter>
        </Group>
        <Group $width={71}>
          <GroupBody $inset={12}>
            <BigButton><IconBox><GridPaperIcon /></IconBox>稿纸<br />设置</BigButton>
          </GroupBody>
          <GroupFooter><GroupTitle>稿纸</GroupTitle></GroupFooter>
        </Group>
        <Group $width={340}>
          <GroupBody $inset={10}>
            <Fields>
              <FieldsTitle>缩进</FieldsTitle>
              <FieldsTitle>间距</FieldsTitle>
              {FIELDS.map(f => (
                <Field key={f.id} $label={f.w}>
                  {f.icon}
                  <FieldLabel htmlFor={f.id}>{f.label}</FieldLabel>
                  <Spin>
                    <SpinInput id={f.id} defaultValue="" />
                    <SpinArrows>
                      <SpinArrow aria-label="增加"><TinyArrow /></SpinArrow>
                      <SpinArrow aria-label="减少"><TinyArrow down /></SpinArrow>
                    </SpinArrows>
                  </Spin>
                </Field>
              ))}
            </Fields>
          </GroupBody>
          <GroupFooter><GroupTitle>段落</GroupTitle><Launcher aria-label="段落选项"><LauncherIcon /></Launcher></GroupFooter>
        </Group>
        <Group $width={408}>
          <GroupBody $inset={12}>
            {ARRANGE.map(b => (
              <BigButton key={b.label} $disabled={b.off} disabled={b.off}>
                <IconBox>{b.icon}</IconBox>{b.label}
                {b.off && <CaretBox><Caret color="#b1b1b1" /></CaretBox>}
              </BigButton>
            ))}
            <SmallColumn $inset={4}>
              {ARRANGE_SMALL.map(b => (
                <SmallButton key={b.label} $disabled={b.off} disabled={b.off}>
                  {b.icon}{b.label}<Caret color={b.off ? '#b1b1b1' : '#666'} />
                </SmallButton>
              ))}
            </SmallColumn>
          </GroupBody>
          <GroupFooter><GroupTitle>排列</GroupTitle></GroupFooter>
        </Group>
        <Collapse aria-label="折叠功能区"><ChevronUp small color="#444" /></Collapse>
      </Ribbon>

      <Canvas>
        <Page>
          <PageHeader><Mark>↵</Mark></PageHeader>
          <CropMarks><Crop $side="left" /><Crop $side="right" /></CropMarks>
          {PARAS.map((p, i) => <ParagraphView key={i} para={p} />)}
        </Page>
      </Canvas>

      <StatusBar>
        <StatusButton>第 1 页，共 4 页</StatusButton>
        <StatusButton>3001/3001 个字</StatusButton>
        <StatusButton aria-label="校对"><ProofIcon /></StatusButton>
        <StatusButton>中文(中国)</StatusButton>
        <StatusRight>
          <ViewButton aria-label="阅读视图"><ReadIcon /></ViewButton>
          <ViewButton $active aria-label="页面视图"><PrintIcon /></ViewButton>
          <ViewButton aria-label="Web 版式视图"><WebIcon /></ViewButton>
          <ZoomArea>
            <button aria-label="缩小"><Icon w={11} h={11}><path d="M0 5.500h11" stroke="#555" /></Icon></button>
            <ZoomSlider type="range" min={10} max={190} defaultValue={80} aria-label="显示比例" />
            <button aria-label="放大"><Icon w={11} h={11}><path d="M0 5.500h11M5.500 0v11" stroke="#555" /></Icon></button>
          </ZoomArea>
          <ZoomValue>80%</ZoomValue>
        </StatusRight>
      </StatusBar>

      <TaskBar>
        <TaskSlot $narrow aria-label="开始"><TaskIcon><StartIcon /></TaskIcon></TaskSlot>
        <TaskSlot $narrow aria-label="任务视图"><TaskIcon><TaskViewIcon /></TaskIcon></TaskSlot>
        {APPS.map((a, i) => (
          <TaskSlot key={a.name} $first={i === 0} $active={a.run === 'wide'} aria-label={a.name}>
            <TaskIcon>{a.icon}</TaskIcon>
            <RunBar $kind={a.run} />
          </TaskSlot>
        ))}
        <Tray>
          <TrayButton $gap={32} aria-label="搜狗输入法"><SogouIcon size={21} /></TrayButton>
          <TrayButton $gap={8} aria-label="电池">
            <PlugIcon /><Battery><BatteryCell>97%</BatteryCell><BatteryTip /></Battery>
          </TrayButton>
          <TrayButton $gap={15} aria-label="显示隐藏的图标"><ChevronUp color="#fff" /></TrayButton>
          <TrayButton $gap={15} aria-label="网络"><WifiIcon /></TrayButton>
          <TrayButton $gap={20} aria-label="触笔"><PenIcon /></TrayButton>
          <Clock><span>21:48</span><span>2020/9/29</span></Clock>
          <TrayButton $gap={25} aria-label="通知"><NoticeIcon /></TrayButton>
          <ShowDesktop aria-label="显示桌面" />
        </Tray>
      </TaskBar>

      <ImeBar>
        <ImeLogo><SogouIcon size={37} /></ImeLogo>
        <ImeButton>中</ImeButton>
        <ImeButton aria-label="标点"><PunctIcon /></ImeButton>
        <ImeButton aria-label="表情"><SmileIcon /></ImeButton>
        <ImeButton aria-label="语音"><MicIcon /></ImeButton>
        <ImeButton aria-label="键盘"><KeyboardIcon /></ImeButton>
        <ImeButton aria-label="账户"><UserIcon /></ImeButton>
        <ImeButton aria-label="皮肤"><ShirtIcon /></ImeButton>
        <ImeButton aria-label="工具箱"><AppsIcon /></ImeButton>
      </ImeBar>
      <SideGauge><GaugeFill /></SideGauge>
      <Watermark>
        <MarkRow><MarkLatin>Bai</MarkLatin><PawIcon /><MarkHan>经验</MarkHan></MarkRow>
        <MarkUrl>jingyan.baidu.com</MarkUrl>
      </Watermark>
    </Screen>
  );
}
